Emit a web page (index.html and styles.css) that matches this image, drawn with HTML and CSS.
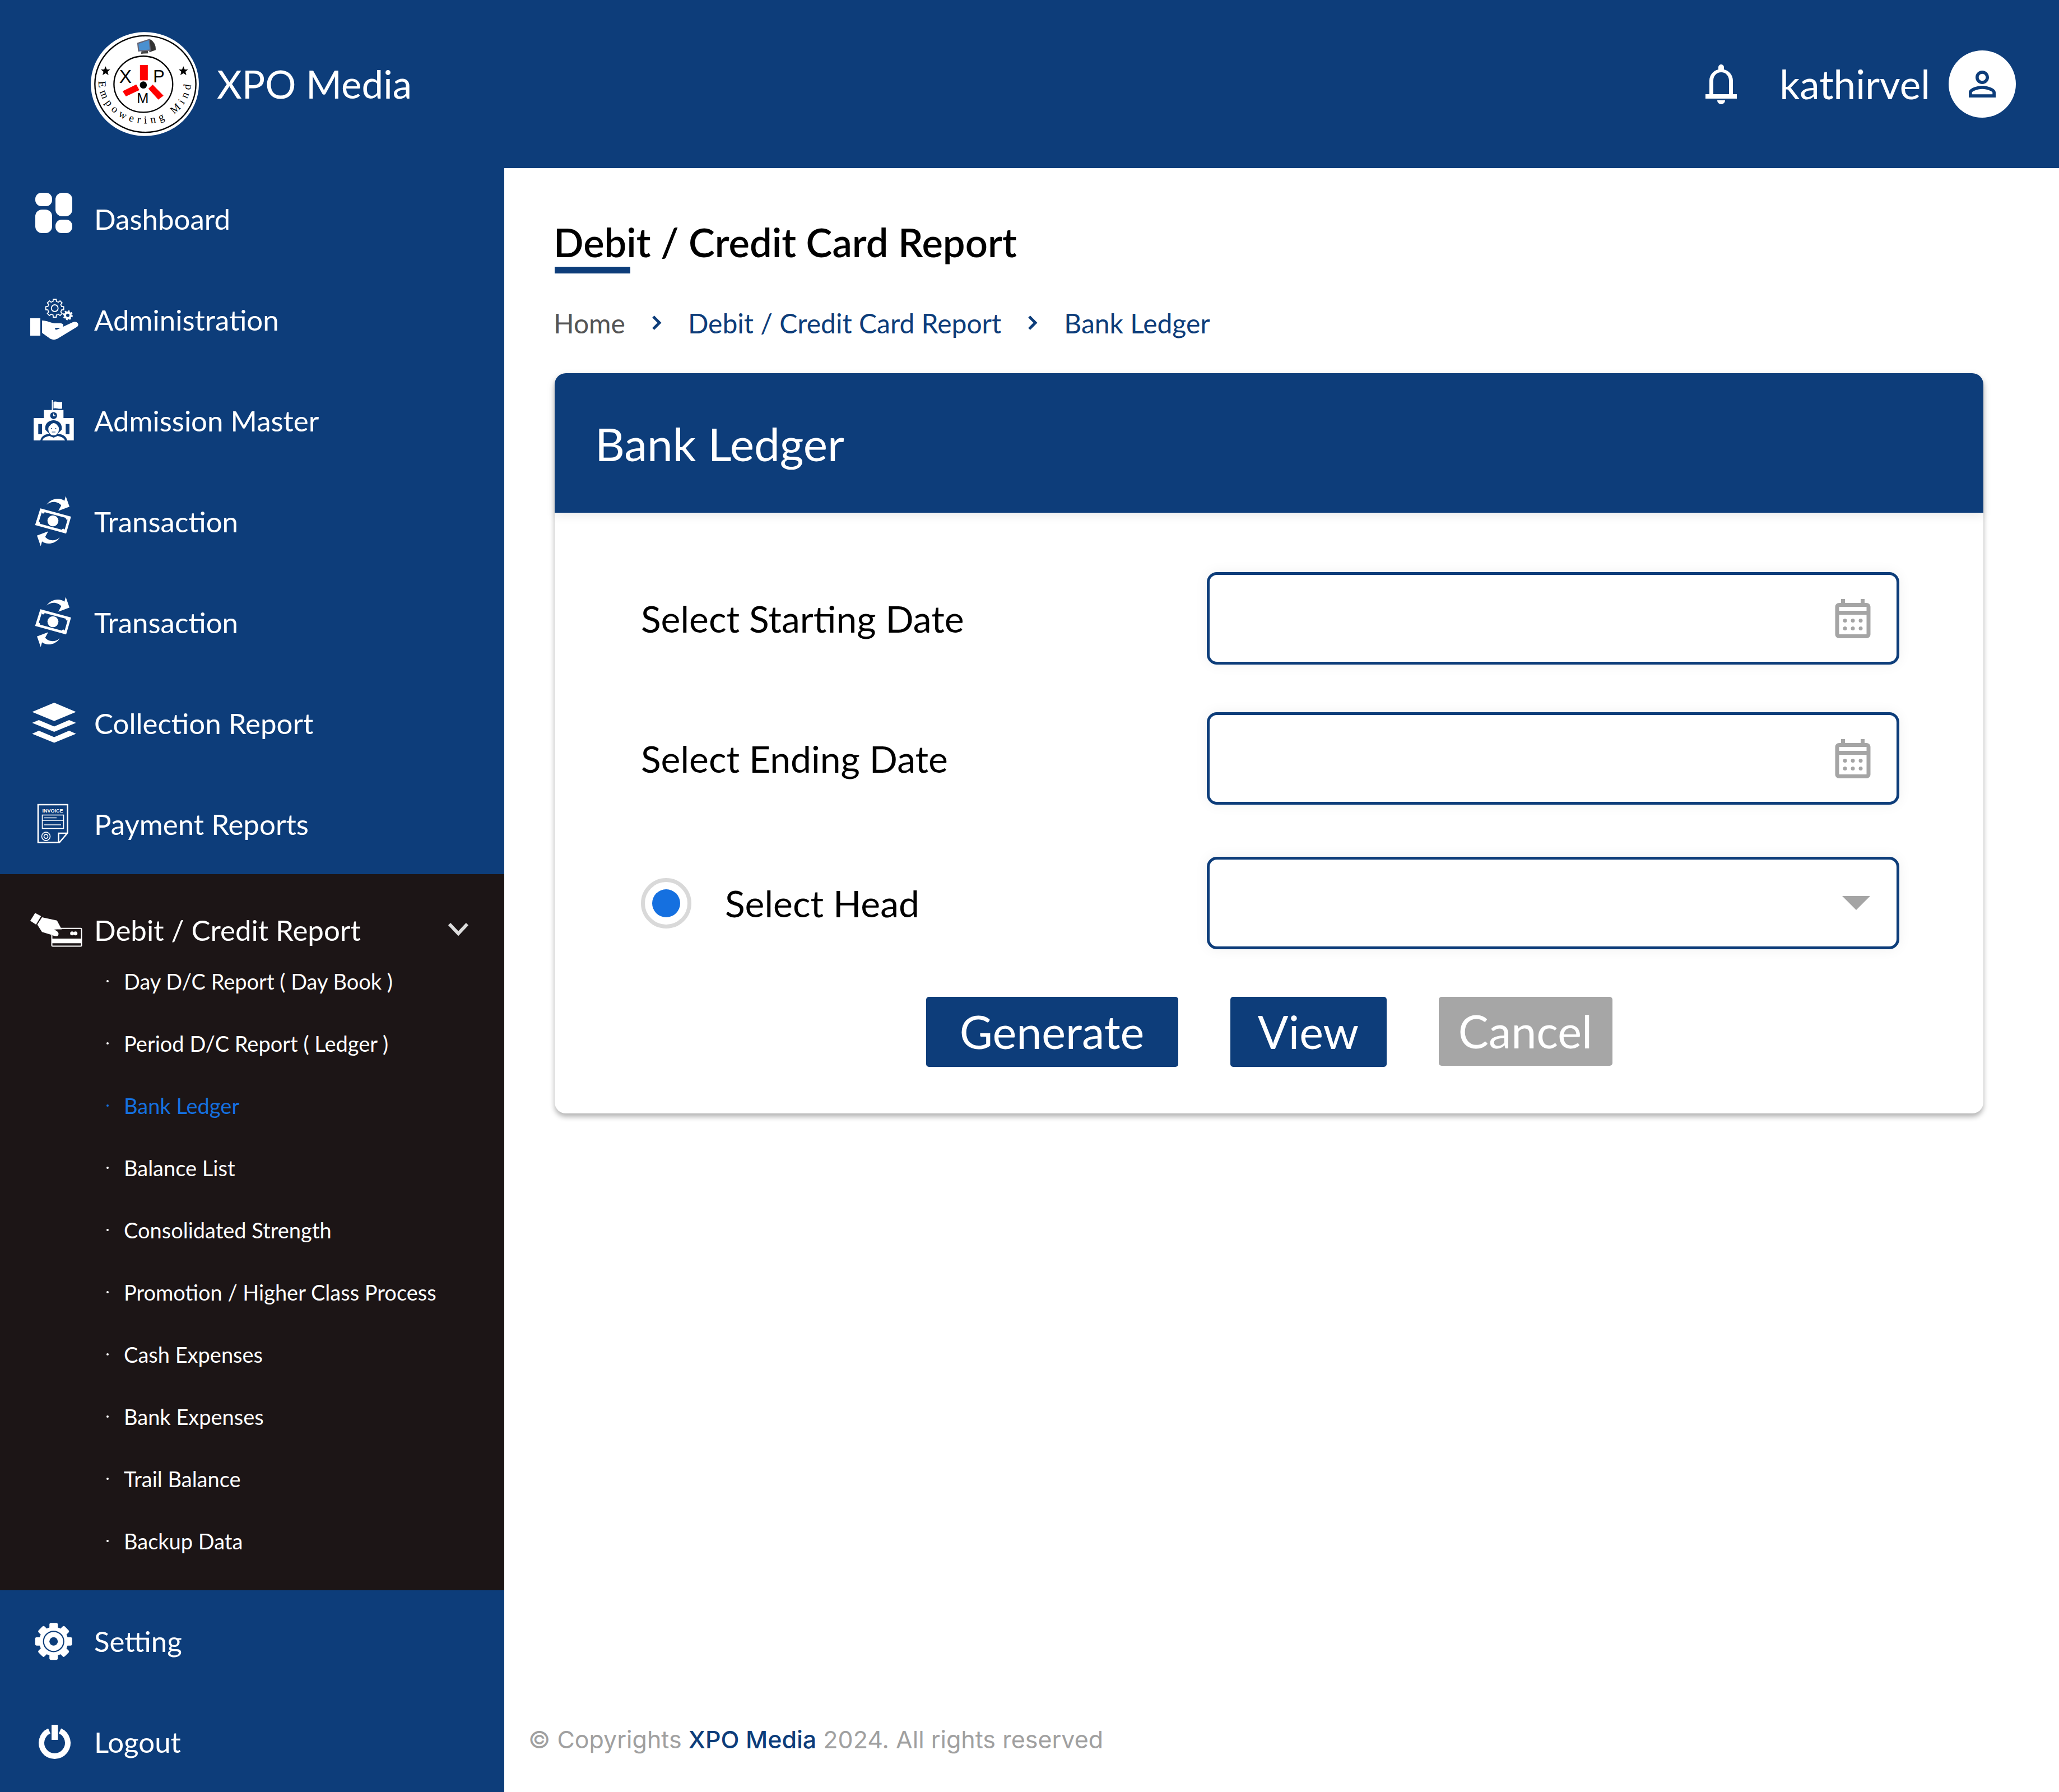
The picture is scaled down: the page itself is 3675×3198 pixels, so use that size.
FILE: index.html
```html
<!DOCTYPE html>
<html lang="en">
<head>
<meta charset="utf-8">
<title>Bank Ledger</title>
<link rel="stylesheet" href="styles.css">
</head>
<body>
<div class="app">
  <header class="topbar">
    <div class="brand">
      <svg class="logo" viewBox="97 82 578 556">
        <ellipse cx="386" cy="360" rx="289" ry="278" fill="#fff"/>
        <ellipse cx="389" cy="360" rx="270" ry="258" fill="none" stroke="#000" stroke-width="7"/>
        <ellipse cx="378" cy="361" rx="157" ry="150" fill="none" stroke="#000" stroke-width="7"/>
        <path d="M412 120C432 130 446 150 444 178L410 190Z" fill="#333"/>
        <polygon points="368,184 402,182 404,196 366,198" fill="#444"/>
        <polygon points="345,140 412,118 418,182 350,186" fill="#667"/>
        <polygon points="352,145 407,126 412,176 356,180" fill="#4a90d0"/>
        <polygon fill="#000" points="176,265 183,282 201,282 187,294 192,312 176,302 160,312 165,294 151,282 169,282"/>
        <polygon fill="#000" points="592,265 599,282 617,282 603,294 608,312 592,302 576,312 581,294 567,282 585,282"/>
        <rect x="360" y="258" width="42" height="82" fill="#f00"/>
        <polygon fill="#f00" points="267,398 340,362 357,392 285,426"/>
        <polygon fill="#f00" points="428,363 486,422 458,443 405,385"/>
        <circle cx="378" cy="365" r="19" fill="#000"/>
        <text class="logo-letter" x="282" y="353" font-size="100" text-anchor="middle">X</text>
        <text class="logo-letter" x="461" y="350" font-size="92" text-anchor="middle">P</text>
        <text class="logo-letter" x="375" y="463" font-size="76" text-anchor="middle">M</text>
        <path id="logo-arc" d="M138 345A248 226 0 0 0 634 345" fill="none"/>
        <text class="logo-ring" font-size="58"><textPath href="#logo-arc" textLength="725" lengthAdjust="spacing">Empowering Mind</textPath></text>
      </svg>
      <span class="brand-name">XPO Media</span>
    </div>
    <div class="user">
      <svg class="bell" viewBox="0 0 56 71">
        <path fill="#fff" d="M23 9V5a5 5 0 0 1 10 0v4c9 2 16 10 16 20v24h-7V29c0-9-6-15-14-15s-14 6-14 15v24H7V29C7 19 14 11 23 9Z"/>
        <rect y="53" width="56" height="8" fill="#fff"/>
        <path fill="#fff" d="M21 64h14a7 7 0 0 1-14 0Z"/>
      </svg>
      <span class="user-name">kathirvel</span>
      <span class="avatar">
        <svg class="avatar-icon" viewBox="0 0 24 24"><path fill="#0d3d7a" d="M12 5.9c1.16 0 2.1.94 2.1 2.1s-.94 2.1-2.1 2.1S9.9 9.16 9.9 8s.94-2.1 2.1-2.1m0 9c2.97 0 6.1 1.46 6.1 2.1v1.1H5.9V17c0-.64 3.13-2.1 6.1-2.1M12 4C9.79 4 8 5.79 8 8s1.79 4 4 4 4-1.79 4-4-1.79-4-4-4zm0 9c-2.67 0-8 1.34-8 4v3h16v-3c0-2.66-5.33-4-8-4z"/></svg>
      </span>
    </div>
  </header>

  <aside class="sidebar">
    <a class="nav-item">
      <svg class="nav-icon" viewBox="0 0 100 100" fill="#fff">
        <rect x="13" y="4" width="30" height="24" rx="11"/>
        <rect x="49" y="4" width="30" height="42" rx="12"/>
        <rect x="13" y="34" width="30" height="42" rx="12"/>
        <rect x="49" y="52" width="30" height="24" rx="11"/>
      </svg>
      <span>Dashboard</span>
    </a>
    <a class="nav-item">
      <svg class="nav-icon" viewBox="0 0 100 100" fill="#fff">
        <rect x="4" y="48" width="18" height="31"/>
        <path d="M25 52C34 52 40 56 47 57L58 57C64 57 65 63 59 65L49 65C47 67 49 69 52 68L80 55C86 52 93 58 88 63L55 83C49 87 44 87 39 84L25 74Z"/>
        <g fill="none" stroke="#fff" stroke-width="1.8" transform="translate(47.7 30)">
          <circle r="6"/>
          <g>
            <path d="M-4.8-11.5L-3-12.2L-2.6-16H2.6L3-12.2L4.8-11.5"/>
            <path transform="rotate(45)" d="M-4.8-11.5L-3-12.2L-2.6-16H2.6L3-12.2L4.8-11.5"/>
            <path transform="rotate(90)" d="M-4.8-11.5L-3-12.2L-2.6-16H2.6L3-12.2L4.8-11.5"/>
            <path transform="rotate(135)" d="M-4.8-11.5L-3-12.2L-2.6-16H2.6L3-12.2L4.8-11.5"/>
            <path transform="rotate(180)" d="M-4.8-11.5L-3-12.2L-2.6-16H2.6L3-12.2L4.8-11.5"/>
            <path transform="rotate(225)" d="M-4.8-11.5L-3-12.2L-2.6-16H2.6L3-12.2L4.8-11.5"/>
            <path transform="rotate(270)" d="M-4.8-11.5L-3-12.2L-2.6-16H2.6L3-12.2L4.8-11.5"/>
            <path transform="rotate(315)" d="M-4.8-11.5L-3-12.2L-2.6-16H2.6L3-12.2L4.8-11.5"/>
          </g>
        </g>
        <circle cx="71" cy="42.7" r="5" fill="none" stroke="#fff" stroke-width="4"/>
        <circle cx="71" cy="42.7" r="7.6" fill="none" stroke="#fff" stroke-width="2.6" stroke-dasharray="3 3"/>
      </svg>
      <span>Administration</span>
    </a>
    <a class="nav-item">
      <svg class="nav-icon" viewBox="0 0 100 100" fill="#fff">
        <rect x="42.5" y="14" width="1.8" height="18"/>
        <path d="M45.5 17C50 15 55 19 61 17V29C55 31 50 27 45.5 29Z"/>
        <path d="M28.3 31.7H63.3V46H81.7V86H10V46H28.3Z"/>
        <circle cx="45.7" cy="41.7" r="6.2" fill="#0d3d7a"/>
        <path d="M45.7 38V42H49" fill="none" stroke="#fff" stroke-width="1.3"/>
        <rect x="18.3" y="56.7" width="6.7" height="18.3" fill="#0d3d7a"/>
        <rect x="67.3" y="56.7" width="6.7" height="18.3" fill="#0d3d7a"/>
        <path d="M22 86C24 77 32 75 38 74L31 67C29 56 37 50 45.7 50C54 50 62 56 60 67L53 74C60 75 68 77 70 86H66C64 81 58 79 53 78L45.7 81L38 78C33 79 27 81 25.500 86Z" fill="#0d3d7a"/>
        <ellipse cx="45.7" cy="66" rx="9.500" ry="11"/>
        <path d="M36 62C40 60 41 55 46 55C51 55 52 60 55.500 62C55 57 51 53 45.700 53C40 53 36 57 36 62Z" fill="#0d3d7a"/>
        <circle cx="42" cy="65" r="1" fill="#0d3d7a"/>
        <circle cx="49.500" cy="65" r="1" fill="#0d3d7a"/>
        <path d="M42.500 71H49" stroke="#0d3d7a" stroke-width="1"/>
      </svg>
      <span>Admission Master</span>
    </a>
    <a class="nav-item">
      <svg class="nav-icon" viewBox="0 0 100 100">
        <polygon points="23.500,30 74,43.500 66.500,69.500 15.500,55.500" fill="none" stroke="#fff" stroke-width="4.500"/>
        <circle cx="44.500" cy="49.500" r="9.800" fill="#fff"/>
        <circle cx="27" cy="34" r="2.500" fill="#fff"/><circle cx="70" cy="45" r="2.500" fill="#fff"/>
        <circle cx="63" cy="66" r="2.500" fill="#fff"/><circle cx="19" cy="54" r="2.500" fill="#fff"/>
        <path fill="#fff" d="M33.300 20.800C39 11 55 6 65 13.700L67.300 5.300L74 24.200L54 31.800L59.300 22C54 15 42 13 33.300 20.800Z"/>
        <path fill="#fff" d="M56.700 79.200C51 89 35 94 25 86.300L22.700 94.700L16 75.800L36 68.200L30.700 78C36 85 48 87 56.700 79.200Z"/>
      </svg>
      <span>Transaction</span>
    </a>
    <a class="nav-item">
      <svg class="nav-icon" viewBox="0 0 100 100">
        <polygon points="23.500,30 74,43.500 66.500,69.500 15.500,55.500" fill="none" stroke="#fff" stroke-width="4.500"/>
        <circle cx="44.500" cy="49.500" r="9.800" fill="#fff"/>
        <circle cx="27" cy="34" r="2.500" fill="#fff"/><circle cx="70" cy="45" r="2.500" fill="#fff"/>
        <circle cx="63" cy="66" r="2.500" fill="#fff"/><circle cx="19" cy="54" r="2.500" fill="#fff"/>
        <path fill="#fff" d="M33.300 20.800C39 11 55 6 65 13.700L67.300 5.300L74 24.200L54 31.800L59.300 22C54 15 42 13 33.300 20.800Z"/>
        <path fill="#fff" d="M56.700 79.200C51 89 35 94 25 86.300L22.700 94.700L16 75.800L36 68.200L30.700 78C36 85 48 87 56.700 79.200Z"/>
      </svg>
      <span>Transaction</span>
    </a>
    <a class="nav-item">
      <svg class="nav-icon" viewBox="0 0 100 100" fill="#fff">
        <polygon points="46.700,14 85.700,30.400 46.700,46.800 7.300,30.400"/>
        <polygon points="7.300,50.100 19.300,45 46.700,56.500 73.300,45 85.700,50.100 46.700,66.100"/>
        <polygon points="7.300,69.500 19.300,64 46.700,75.400 73.300,64 85.700,69.500 46.700,85.500"/>
      </svg>
      <span>Collection Report</span>
    </a>
    <a class="nav-item">
      <svg class="nav-icon" viewBox="0 0 100 100">
        <path d="M56 83.500H18V16H70.500V66.500ZM54.500 83V67H70" fill="none" stroke="#fff" stroke-width="2.600"/>
        <text class="invoice-mark" x="44" y="30.300" text-anchor="middle">INVOICE</text>
        <rect x="25.500" y="34.500" width="38" height="24" fill="none" stroke="#fff" stroke-width="1.600"/>
        <path d="M29 39.500H51M25.500 44H64M29 52H59" stroke="#fff" stroke-width="1.600"/>
        <circle cx="32" cy="72.600" r="7.500" fill="none" stroke="#fff" stroke-width="1.600"/>
        <circle cx="32" cy="72.600" r="3.500" fill="none" stroke="#fff" stroke-width="1.600"/>
      </svg>
      <span>Payment Reports</span>
    </a>

    <section class="nav-group">
      <a class="nav-head">
        <svg class="nav-icon" viewBox="0 0 100 100" fill="#fff">
          <polygon points="12.700,20.300 23.300,26 14.300,41 4,34.300"/>
          <path d="M25 28L51.700 33.700L59.300 48L46 50C52 52 56 55 54 60C52 63 47 62 41.700 59.300L25 54.300L16.500 41Z"/>
          <path d="M59 47.800H94C95 47.800 95.500 48.500 95.500 49.500V78C95.500 79 95 79.500 94 79.500H44C43 79.500 42.500 79 42.500 78V60" fill="none" stroke="#fff" stroke-width="2"/>
          <path d="M46 48.500H60" stroke="#fff" stroke-width="2"/>
          <rect x="43" y="66" width="53" height="8.300"/>
          <circle cx="78.700" cy="56.700" r="3.500"/>
          <circle cx="84.700" cy="56.700" r="3.500"/>
        </svg>
        <span>Debit / Credit Report</span>
        <svg class="chevron" viewBox="0 0 36 24"><path d="M2 3L18 20L34 3" fill="none" stroke="#ddd" stroke-width="6"/></svg>
      </a>
      <a class="sub-item">Day D/C Report ( Day Book )</a>
      <a class="sub-item">Period D/C Report ( Ledger )</a>
      <a class="sub-item sub-active">Bank Ledger</a>
      <a class="sub-item">Balance List</a>
      <a class="sub-item">Consolidated Strength</a>
      <a class="sub-item">Promotion / Higher Class Process</a>
      <a class="sub-item">Cash Expenses</a>
      <a class="sub-item">Bank Expenses</a>
      <a class="sub-item">Trail Balance</a>
      <a class="sub-item">Backup Data</a>
    </section>

    <a class="nav-item">
      <svg class="nav-icon" viewBox="0 0 100 100" fill="#fff">
        <g transform="translate(45.700 51.300)">
          <rect x="-7.500" y="-33" width="15" height="66" rx="3"/>
          <rect x="-7.500" y="-33" width="15" height="66" rx="3" transform="rotate(45)"/>
          <rect x="-7.500" y="-33" width="15" height="66" rx="3" transform="rotate(90)"/>
          <rect x="-7.500" y="-33" width="15" height="66" rx="3" transform="rotate(135)"/>
          <circle r="26"/>
          <circle r="18" fill="none" stroke="#0d3d7a" stroke-width="2.200"/>
          <circle r="7.500" fill="#0d3d7a"/>
        </g>
      </svg>
      <span>Setting</span>
    </a>
    <a class="nav-item">
      <svg class="nav-icon" viewBox="0 0 100 100">
        <path d="M38 31A23.500 23.500 0 1 0 57 31" fill="none" stroke="#fff" stroke-width="10"/>
        <rect x="42" y="20" width="11.300" height="27" fill="#fff"/>
      </svg>
      <span>Logout</span>
    </a>
  </aside>

  <main class="content">
    <h1 class="page-title">Debit / Credit Card Report</h1>
    <nav class="crumbs">
      <span class="crumb-home">Home</span>
      <svg class="crumb-sep" viewBox="0 0 20 30"><path d="M4 4L15 15L4 26" fill="none" stroke="#0d3d7a" stroke-width="5"/></svg>
      <span class="crumb-link">Debit / Credit Card Report</span>
      <svg class="crumb-sep" viewBox="0 0 20 30"><path d="M4 4L15 15L4 26" fill="none" stroke="#0d3d7a" stroke-width="5"/></svg>
      <span class="crumb-link">Bank Ledger</span>
    </nav>

    <section class="card">
      <h2 class="card-head">Bank Ledger</h2>
      <div class="card-body">
        <div class="field field-date">
          <label class="field-label">Select Starting Date</label>
          <div class="control">
            <svg class="cal" viewBox="0 0 24 24"><path fill="#a5a5a5" d="M19 4h-1V2h-2v2H8V2H6v2H5c-1.100 0-2 .9-2 2v14c0 1.100.9 2 2 2h14c1.100 0 2-.9 2-2V6c0-1.100-.9-2-2-2zm0 16H5V10h14v10zM5 8V6h14v2H5z"/><g fill="#a5a5a5"><circle cx="8" cy="13" r="1"/><circle cx="12" cy="13" r="1"/><circle cx="16" cy="13" r="1"/><circle cx="8" cy="17" r="1"/><circle cx="12" cy="17" r="1"/><circle cx="16" cy="17" r="1"/></g></svg>
          </div>
        </div>
        <div class="field field-date">
          <label class="field-label">Select Ending Date</label>
          <div class="control">
            <svg class="cal" viewBox="0 0 24 24"><path fill="#a5a5a5" d="M19 4h-1V2h-2v2H8V2H6v2H5c-1.100 0-2 .9-2 2v14c0 1.100.9 2 2 2h14c1.100 0 2-.9 2-2V6c0-1.100-.9-2-2-2zm0 16H5V10h14v10zM5 8V6h14v2H5z"/><g fill="#a5a5a5"><circle cx="8" cy="13" r="1"/><circle cx="12" cy="13" r="1"/><circle cx="16" cy="13" r="1"/><circle cx="8" cy="17" r="1"/><circle cx="12" cy="17" r="1"/><circle cx="16" cy="17" r="1"/></g></svg>
          </div>
        </div>
        <div class="field field-head">
          <label class="field-label radio-label"><span class="radio"></span>Select Head</label>
          <div class="control">
            <span class="caret"></span>
          </div>
        </div>
        <div class="actions">
          <button class="btn btn-generate">Generate</button>
          <button class="btn btn-view">View</button>
          <button class="btn btn-cancel">Cancel</button>
        </div>
      </div>
    </section>

    <footer class="foot">© Copyrights <b class="foot-brand">XPO Media</b> 2024. All rights reserved</footer>
  </main>
</div>
</body>
</html>
```
FILE: styles.css
```css
* { box-sizing: border-box; }
html, body { margin: 0; padding: 0; background: #fff; }
body { font-family: "Lato", "Liberation Sans", sans-serif; color: #000; }

.app {
  width: 3675px;
  height: 3198px;
  display: grid;
  grid-template-columns: 900px 1fr;
  grid-template-rows: 300px 1fr;
}

/* top bar */
.topbar {
  grid-column: 1 / 3;
  background: #0d3d7a;
  display: flex;
  align-items: center;
  justify-content: space-between;
  padding: 0 77px 0 162px;
  color: #fff;
}
.brand { display: flex; align-items: center; gap: 32px; }
.logo { width: 193px; height: 186px; display: block; }
.logo-letter { font-family: "Liberation Sans", sans-serif; fill: #000; }
.logo-ring { font-family: "Liberation Serif", serif; fill: #000; }
.brand-name { font-size: 69px; line-height: 80px; }
.user { display: flex; align-items: center; }
.bell { width: 56px; height: 71px; margin-right: 76px; display: block; }
.user-name { font-size: 71px; line-height: 80px; margin-right: 33px; }
.avatar {
  width: 120px; height: 120px; border-radius: 50%;
  background: #fff;
  display: flex; align-items: center; justify-content: center;
}
.avatar-icon { width: 72px; height: 72px; display: block; }

/* sidebar */
.sidebar { background: #0d3d7a; color: #fff; display: flex; flex-direction: column; }
.nav-item {
  height: 180px;
  flex: none;
  display: flex;
  align-items: center;
  gap: 18px;
  padding-left: 50px;
  font-size: 51px;
}
.nav-icon { width: 100px; height: 100px; flex: none; display: block; }
.invoice-mark { font-family: "Liberation Sans", sans-serif; font-weight: 700; font-size: 9px; fill: #fff; }
.nav-group { background: #1c1516; padding: 13px 0 33px; flex: none; }
.nav-head {
  height: 122px;
  padding: 50px 64px 0 50px;
  display: flex;
  align-items: center;
  gap: 18px;
  font-size: 51px;
}
.chevron { width: 36px; height: 24px; margin: 0 0 3px auto; display: block; }
.sub-item {
  height: 111px;
  display: flex;
  align-items: center;
  padding-left: 190px;
  font-size: 38px;
  color: #fff;
}
.sub-item::before {
  content: "";
  width: 4px; height: 4px;
  border-radius: 50%;
  background: currentColor;
  margin-right: 27px;
}
.sub-active { color: #1570e0; }

/* content */
.content { display: flex; flex-direction: column; padding-top: 92px; min-width: 0; }
.page-title {
  margin: 0 0 53px 88px;
  font-size: 70.5px;
  line-height: 80px;
  font-weight: 600;
  height: 96px;
}
.page-title::after {
  content: "";
  display: block;
  width: 135px; height: 12px;
  margin: 4px 0 0 2px;
  background: #0d3d7a;
}
.crumbs {
  margin: 0 0 55px 88px;
  height: 70px;
  display: flex;
  align-items: center;
  font-size: 48px;
}
.crumb-home { color: #555; }
.crumb-link { color: #0d3d7a; }
.crumb-sep { width: 20px; height: 30px; margin: 0 46px; display: block; }

.card {
  width: 2550px;
  margin-left: 90px;
  background: #fff;
  border-radius: 20px;
  box-shadow: 0 6px 10px rgba(0,0,0,.3);
}
.card-head {
  margin: 0;
  height: 249px;
  background: #0d3d7a;
  color: #fff;
  border-radius: 20px 20px 0 0;
  padding-left: 72px;
  display: flex;
  align-items: center;
  font-size: 82px;
  font-weight: 400;
  box-shadow: 0 6px 18px rgba(0,0,0,.08);
}
.card-body { padding: 106px 150px 83px 154px; display: flex; flex-direction: column; }
.field { display: grid; grid-template-columns: 1010px 1236px; align-items: center; }
.field-date { margin-bottom: 85px; }
.field-head { margin-top: 8px; margin-bottom: 85px; }
.field-label { font-size: 66px; line-height: 80px; }
.radio-label { display: flex; align-items: center; gap: 60px; }
.radio {
  width: 90px; height: 90px; flex: none;
  border: 7px solid #d9d9d9;
  border-radius: 50%;
  display: flex; align-items: center; justify-content: center;
}
.radio::after { content: ""; width: 50px; height: 50px; border-radius: 50%; background: #1570e0; }
.control {
  height: 165px;
  border: 5px solid #0d3d7a;
  border-radius: 18px;
  background: #fff;
  box-shadow: 0 0 24px rgba(0,0,0,.06);
  display: flex;
  align-items: center;
  justify-content: flex-end;
  padding-right: 36px;
}
.cal { width: 84px; height: 84px; display: block; }
.caret {
  width: 0; height: 0;
  margin-right: 11px;
  border-left: 25px solid transparent;
  border-right: 25px solid transparent;
  border-top: 25px solid #a5a5a5;
}
.actions { display: flex; justify-content: center; gap: 93px; padding-right: 4px; }
.btn {
  height: 125px;
  border: 0;
  border-radius: 5px;
  color: #fff;
  background: #0d3d7a;
  font-family: inherit;
  font-size: 81px;
  padding: 0 0 3px;
}
.btn-generate { width: 450px; }
.btn-view { width: 279px; }
.btn-cancel { width: 310px; height: 123px; background: #a6a6a6; }

.foot {
  margin-top: auto;
  padding: 0 0 64px 43px;
  font-family: "Inter", "Liberation Sans", sans-serif;
  font-size: 43px;
  line-height: 60px;
  color: #a0a0a0;
}
.foot-brand { color: #0d3d7a; font-weight: 500; }
```
